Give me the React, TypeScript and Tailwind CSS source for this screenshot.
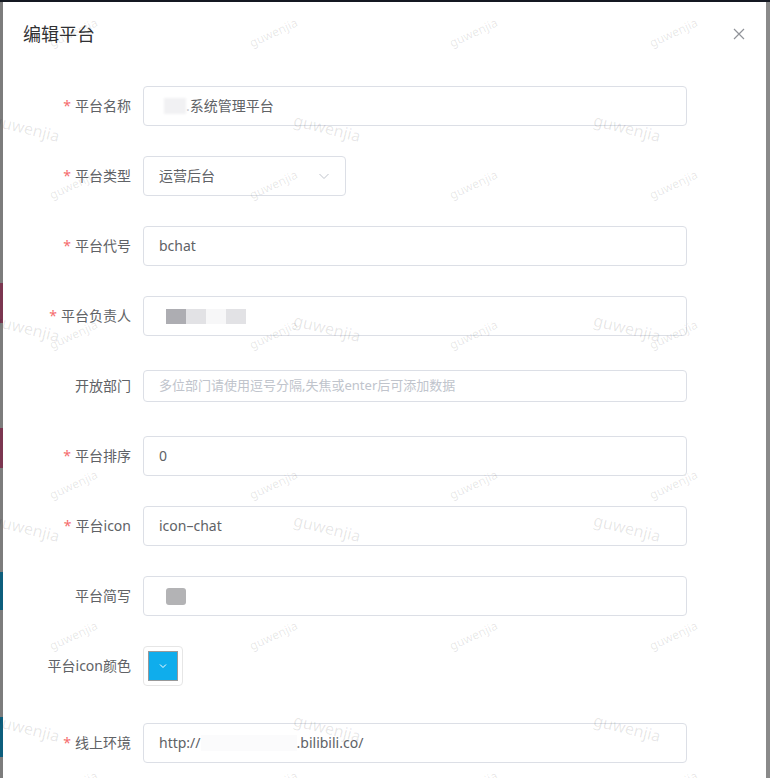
import React from "react";

const font = { fontFamily: '"Noto Sans", "Noto Sans CJK SC", sans-serif' };

const smallMarks: [number, number][] = [];
for (const y of [33, 185, 335, 485, 636, 786]) {
  for (const x of [50, 250, 450, 650]) smallMarks.push([x, y]);
}
const bigMarks: [number, number][] = [];
for (const y of [128, 328, 528, 728]) {
  for (const x of [-8, 293, 593]) bigMarks.push([x, y]);
}

function Item({
  label,
  required,
  children,
  className = "mb-[30px]",
}: {
  label: string;
  required?: boolean;
  children: React.ReactNode;
  className?: string;
}) {
  return (
    <div className={`flex ${className}`}>
      <label className="flex h-10 w-[120px] shrink-0 items-center justify-end pr-3 text-sm text-[#606266]">
        {required && <span className="mr-1 text-[#f56c6c]">*</span>}
        {label}
      </label>
      <div className="flex w-[544px] items-center">{children}</div>
    </div>
  );
}

function Input({ children }: { children?: React.ReactNode }) {
  return (
    <div className="flex h-10 w-full items-center rounded border border-[#dcdfe6] bg-white px-[15px] text-sm text-[#606266]">
      {children}
    </div>
  );
}

export default function App() {
  return (
    <div className="relative h-[778px] w-[770px] overflow-hidden bg-[#808080]" style={font}>
      <div className="h-[2px] bg-[#141821]" />
      <div className="flex h-[776px]">
        {/* page behind the mask, left edge */}
        <div className="flex w-[3px] shrink-0 flex-col bg-[#7c7c7c]">
          <div className="h-[281px]" />
          <div className="h-[40px] bg-[#7b3650]" />
          <div className="h-[105px]" />
          <div className="h-[40px] bg-[#7b3650]" />
          <div className="h-[104px]" />
          <div className="h-[38px] bg-[#0d5e7c]" />
          <div className="h-[107px]" />
          <div className="h-[40px] bg-[#0d5e7c]" />
        </div>

        {/* dialog */}
        <div className="w-[763px] shrink-0 bg-white">
          <div className="flex items-center justify-between px-5 pb-[10px] pt-5">
            <span className="text-[18px] leading-6 text-[#303133]">编辑平台</span>
            <svg width="12" height="12" viewBox="0 0 12 12" className="mr-[1px]">
              <path d="M1 1L11 11M11 1L1 11" stroke="#909399" strokeWidth="1.2" fill="none" />
            </svg>
          </div>

          <div className="px-5 pt-[30px]">
            <Item label="平台名称" required>
              <Input>
                <span className="ml-[5px] h-4 w-[22px] bg-[#f1f1f3] blur-[1px]" />
                <span className="text-[#c8c8cc]">.</span>
                系统管理平台
              </Input>
            </Item>

            <Item label="平台类型" required>
              <div className="flex h-10 w-[203px] items-center justify-between rounded border border-[#dcdfe6] px-[15px] text-sm text-[#606266]">
                运营后台
                <svg width="12" height="12" viewBox="0 0 12 12">
                  <path d="M1.5 4L6 8.5L10.5 4" stroke="#c0c4cc" strokeWidth="1" fill="none" />
                </svg>
              </div>
            </Item>

            <Item label="平台代号" required>
              <Input>bchat</Input>
            </Item>

            <Item label="平台负责人" required>
              <Input>
                <div className="flex h-[15px] items-center blur-[0.5px]">
                  <span className="ml-[7px] h-[15px] w-[20px] bg-[#adadb2]" />
                  <span className="h-[15px] w-[20px] bg-[#e2e2e5]" />
                  <span className="h-[15px] w-[20px] bg-[#f7f7f8]" />
                  <span className="h-[15px] w-[20px] bg-[#e2e2e5]" />
                </div>
              </Input>
            </Item>

            <Item label="开放部门">
              <div className="flex h-8 w-full items-center rounded border border-[#dcdfe6] px-[15px] text-[13px] text-[#c0c4cc]">
                多位部门请使用逗号分隔,失焦或enter后可添加数据
              </div>
            </Item>

            <Item label="平台排序" required>
              <Input>0</Input>
            </Item>

            <Item label="平台icon" required>
              <Input>icon–chat</Input>
            </Item>

            <Item label="平台简写">
              <Input>
                <span className="ml-[7px] h-[17px] w-[20px] rounded-[3px] bg-[#b3b3b5] blur-[0.5px]" />
              </Input>
            </Item>

            <Item label="平台icon颜色" className="mb-[37px]">
              <div className="flex h-10 w-10 items-center justify-center rounded border border-[#e6e6e6]">
                <div className="flex h-[30px] w-[30px] items-center justify-center border border-[#999] bg-[#0fadec]">
                  <svg width="10" height="10" viewBox="0 0 10 10">
                    <path d="M2 3.5L5 6.5L8 3.5" stroke="#ffffff" strokeWidth="1" fill="none" />
                  </svg>
                </div>
              </div>
            </Item>

            <Item label="线上环境" required>
              <Input>
                http://
                <span className="h-4 w-[96px] bg-[#fbfbfc]" />
                .bilibili.co/
              </Input>
            </Item>
          </div>
        </div>

        <div className="w-[4px] shrink-0 bg-[#8a8a8a]" />
      </div>

      {/* watermark layer */}
      <div className="pointer-events-none absolute inset-0 select-none">
        {smallMarks.map(([x, y]) => (
          <span
            key={`s${x}-${y}`}
            className="absolute -rotate-[25deg] text-[12px] leading-none text-black/10"
            style={{ left: x - 2, top: y - 6 }}
          >
            guwenjia
          </span>
        ))}
        {bigMarks.map(([x, y]) => (
          <span
            key={`b${x}-${y}`}
            className="absolute rotate-[14deg] text-[16px] leading-none text-black/10"
            style={{ left: x, top: y - 8 }}
          >
            guwenjia
          </span>
        ))}
      </div>
    </div>
  );
}
